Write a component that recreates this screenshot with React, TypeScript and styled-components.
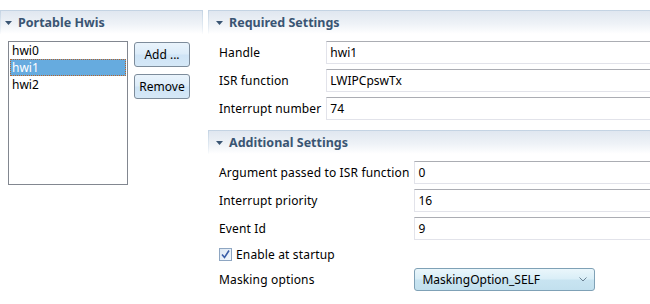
import React from "react";
import styled, { createGlobalStyle } from "styled-components";

const Global = createGlobalStyle`
  html, body { margin: 0; padding: 0; background: #fff; overflow: hidden; }
  body {
    font-family: "Noto Sans", "DejaVu Sans", sans-serif;
    font-size: 12px;
    color: #000;
  }
`;

const Page = styled.div`
  display: flex;
  gap: 5px;
  padding-top: 10px;
  width: 656px;
  overflow: hidden;
`;

const LeftPanel = styled.section`
  width: 203px;
  flex: none;
  display: flex;
  flex-direction: column;
`;

const RightPanel = styled.div`
  flex: 1;
  display: flex;
  flex-direction: column;
  gap: 10px;
`;

const Section = styled.section`
  display: flex;
  flex-direction: column;
`;

const SectionHeader = styled.div<{ $inset: number }>`
  height: 24px;
  box-sizing: border-box;
  display: flex;
  align-items: center;
  gap: 6px;
  padding-left: ${(p) => p.$inset}px;
  border: 1px solid;
  border-bottom: none;
  border-image: linear-gradient(to bottom, #c3d3e3 0%, #dce6f0 50%, rgba(255, 255, 255, 0) 100%) 1;
  background: linear-gradient(to bottom, #e0e7f0 0%, #eef2f7 55%, #ffffff 100%);
  font-weight: bold;
  font-size: 12.5px;
  color: #3a5573;
`;

const Twisty = () => (
  <svg width="7" height="4" viewBox="0 0 7 4">
    <polygon points="0,0 7,0 3.5,4" fill="#3a5573" />
  </svg>
);

const LeftBody = styled.div`
  display: flex;
  align-items: flex-start;
  gap: 6px;
  padding: 7px 0 0 8px;
`;

const List = styled.ul`
  list-style: none;
  margin: 0;
  padding: 0 1px;
  width: 120px;
  height: 144px;
  box-sizing: border-box;
  border: 1px solid #828790;
  background: #fff;
`;

const ListItem = styled.li<{ $selected?: boolean }>`
  height: 17px;
  line-height: 16px;
  box-sizing: border-box;
  padding-left: 1px;
  color: ${(p) => (p.$selected ? "#fff" : "#000")};
  background: ${(p) => (p.$selected ? "#66abdf" : "transparent")};
  border: 1px dotted ${(p) => (p.$selected ? "#b8642a" : "transparent")};
`;

const ButtonColumn = styled.div`
  display: flex;
  flex-direction: column;
  gap: 7px;
  padding-top: 1px;
`;

const PushButton = styled.button`
  width: 56px;
  height: 25px;
  box-sizing: border-box;
  border: 1px solid #7d8c9b;
  border-radius: 3px;
  background: linear-gradient(to bottom, #eaf4fc 0%, #dcecf9 48%, #cfe4f6 52%, #d5e8f7 100%);
  font: inherit;
  color: #000;
  padding: 0;
`;

const Form = styled.div`
  display: grid;
  grid-template-columns: max-content 1fr;
  column-gap: 5px;
  row-gap: 5px;
  align-items: center;
  padding: 7px 0 0 11px;
`;

const Label = styled.label`
  white-space: nowrap;
  letter-spacing: 0.15px;
  color: #000;
`;

const TextField = styled.input`
  height: 23px;
  box-sizing: border-box;
  border: 1px solid #e2e3ea;
  border-top-color: #abadb3;
  padding: 0 3px;
  font: inherit;
  color: #000;
  background: #fff;
  outline: none;
  width: 100%;
`;

const CheckRow = styled.label`
  grid-column: 1 / -1;
  display: flex;
  align-items: center;
  gap: 4px;
  height: 18px;
  letter-spacing: 0.15px;
`;

const CheckBox = styled.span`
  width: 13px;
  height: 13px;
  box-sizing: border-box;
  border: 1px solid #8ea6c2;
  background: linear-gradient(135deg, #dde7f3 0%, #f4f8fc 100%);
  display: flex;
  align-items: center;
  justify-content: center;
`;

const Select = styled.div`
  width: 181px;
  height: 23px;
  box-sizing: border-box;
  border: 1px solid #7fa1b6;
  border-radius: 3px;
  background: linear-gradient(to bottom, #eaf6fb 0%, #d9eef7 48%, #c8e4f1 52%, #c2e0ee 100%);
  display: flex;
  align-items: center;
  justify-content: space-between;
  padding: 0 7px 0 7px;
`;

const Chevron = () => (
  <svg width="8" height="5" viewBox="0 0 8 5">
    <polyline points="0.5,0.5 4,4 7.5,0.5" fill="none" stroke="#6b8293" strokeWidth="1" />
  </svg>
);

const Check = () => (
  <svg width="9" height="9" viewBox="0 0 9 9">
    <polyline points="1,4.5 3.5,7.5 8,0.5" fill="none" stroke="#3a5da6" strokeWidth="1.6" />
  </svg>
);

const required = [
  ["Handle", "hwi1"],
  ["ISR function", "LWIPCpswTx"],
  ["Interrupt number", "74"],
];

const additional = [
  ["Argument passed to ISR function", "0"],
  ["Interrupt priority", "16"],
  ["Event Id", "9"],
];

export default function App() {
  return (
    <>
      <Global />
      <Page>
        <LeftPanel>
          <SectionHeader $inset={4}>
            <Twisty />
            Portable Hwis
          </SectionHeader>
          <LeftBody>
            <List>
              <ListItem>hwi0</ListItem>
              <ListItem $selected>hwi1</ListItem>
              <ListItem>hwi2</ListItem>
            </List>
            <ButtonColumn>
              <PushButton>Add ...</PushButton>
              <PushButton>Remove</PushButton>
            </ButtonColumn>
          </LeftBody>
        </LeftPanel>
        <RightPanel>
          <Section>
            <SectionHeader $inset={7}>
              <Twisty />
              Required Settings
            </SectionHeader>
            <Form>
              {required.map(([l, v]) => (
                <React.Fragment key={l}>
                  <Label>{l}</Label>
                  <TextField readOnly value={v} />
                </React.Fragment>
              ))}
            </Form>
          </Section>
          <Section>
            <SectionHeader $inset={7}>
              <Twisty />
              Additional Settings
            </SectionHeader>
            <Form>
              {additional.map(([l, v]) => (
                <React.Fragment key={l}>
                  <Label>{l}</Label>
                  <TextField readOnly value={v} />
                </React.Fragment>
              ))}
              <CheckRow>
                <CheckBox>
                  <Check />
                </CheckBox>
                Enable at startup
              </CheckRow>
              <Label>Masking options</Label>
              <Select>
                <span>MaskingOption_SELF</span>
                <Chevron />
              </Select>
            </Form>
          </Section>
        </RightPanel>
      </Page>
    </>
  );
}
